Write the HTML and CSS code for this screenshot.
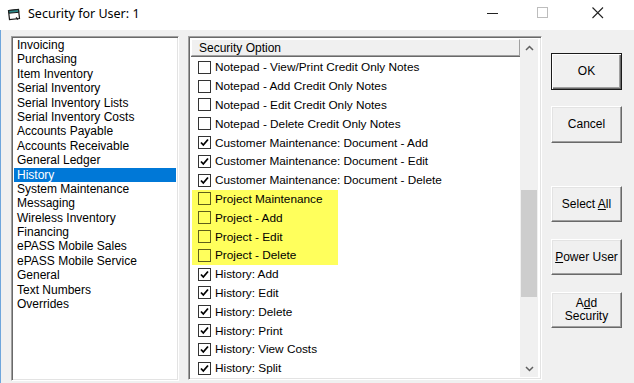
FILE: index.html
```html
<!DOCTYPE html>
<html>
<head>
<meta charset="utf-8">
<link rel="stylesheet" href="styles.css">
</head>
<body>
<div class="window">
  <div class="titlebar">
    <svg class="app-icon" width="14" height="13" viewBox="0 0 14 13">
      <path d="M1.5 2.5 L11.5 1.5 L12.5 10.5 L2.5 11.5 Z" fill="#fff" stroke="#1a1a1a" stroke-width="1.2"/>
      <path d="M1.7 2.5 L11.5 1.5 L11.8 4.3 L2 5.2 Z" fill="#2d8c8c" stroke="#1a1a1a" stroke-width="1"/>
      <path d="M9 9.5 L11 11.5" stroke="#1a1a1a" stroke-width="1.2"/>
    </svg>
    <span class="title">Security for User: 1</span>
    <div class="win-controls">
      <span class="ctl ctl-min"><svg width="12" height="12" viewBox="0 0 12 12"><path d="M0 6.5 H11" stroke="#222" stroke-width="1"/></svg></span>
      <span class="ctl ctl-max"><svg width="12" height="12" viewBox="0 0 12 12"><rect x="0.5" y="0.5" width="10" height="10" fill="none" stroke="#bdbdbd" stroke-width="1"/></svg></span>
      <span class="ctl ctl-close"><svg width="12" height="12" viewBox="0 0 12 12"><path d="M0.5 0.5 L11 11 M11 0.5 L0.5 11" stroke="#222" stroke-width="1.1"/></svg></span>
    </div>
  </div>
  <div class="content">
    <div class="listbox">
      <div class="lb-item">Invoicing</div>
      <div class="lb-item">Purchasing</div>
      <div class="lb-item">Item Inventory</div>
      <div class="lb-item">Serial Inventory</div>
      <div class="lb-item">Serial Inventory Lists</div>
      <div class="lb-item">Serial Inventory Costs</div>
      <div class="lb-item">Accounts Payable</div>
      <div class="lb-item">Accounts Receivable</div>
      <div class="lb-item">General Ledger</div>
      <div class="lb-item selected">History</div>
      <div class="lb-item">System Maintenance</div>
      <div class="lb-item">Messaging</div>
      <div class="lb-item">Wireless Inventory</div>
      <div class="lb-item">Financing</div>
      <div class="lb-item">ePASS Mobile Sales</div>
      <div class="lb-item">ePASS Mobile Service</div>
      <div class="lb-item">General</div>
      <div class="lb-item">Text Numbers</div>
      <div class="lb-item">Overrides</div>
    </div>
    <div class="listview">
      <div class="lv-main">
        <div class="lv-header"><span class="lv-col">Security Option</span></div>
        <div class="lv-rows">
          <div class="row"><span class="cb"></span><span class="lbl">Notepad - View/Print Credit Only Notes</span></div>
          <div class="row"><span class="cb"></span><span class="lbl">Notepad - Add Credit Only Notes</span></div>
          <div class="row"><span class="cb"></span><span class="lbl">Notepad - Edit Credit Only Notes</span></div>
          <div class="row"><span class="cb"></span><span class="lbl">Notepad - Delete Credit Only Notes</span></div>
          <div class="row"><span class="cb checked"><svg width="11" height="11" viewBox="0 0 11 11"><path d="M2 5.5 L4.3 8 L9 2.5" fill="none" stroke="#000" stroke-width="1.8"/></svg></span><span class="lbl">Customer Maintenance: Document - Add</span></div>
          <div class="row"><span class="cb checked"><svg width="11" height="11" viewBox="0 0 11 11"><path d="M2 5.5 L4.3 8 L9 2.5" fill="none" stroke="#000" stroke-width="1.8"/></svg></span><span class="lbl">Customer Maintenance: Document - Edit</span></div>
          <div class="row"><span class="cb checked"><svg width="11" height="11" viewBox="0 0 11 11"><path d="M2 5.5 L4.3 8 L9 2.5" fill="none" stroke="#000" stroke-width="1.8"/></svg></span><span class="lbl">Customer Maintenance: Document - Delete</span></div>
          <div class="highlight">
            <div class="row"><span class="cb"></span><span class="lbl">Project Maintenance</span></div>
            <div class="row"><span class="cb"></span><span class="lbl">Project - Add</span></div>
            <div class="row"><span class="cb"></span><span class="lbl">Project - Edit</span></div>
            <div class="row"><span class="cb"></span><span class="lbl">Project - Delete</span></div>
          </div>
          <div class="row"><span class="cb checked"><svg width="11" height="11" viewBox="0 0 11 11"><path d="M2 5.5 L4.3 8 L9 2.5" fill="none" stroke="#000" stroke-width="1.8"/></svg></span><span class="lbl">History: Add</span></div>
          <div class="row"><span class="cb checked"><svg width="11" height="11" viewBox="0 0 11 11"><path d="M2 5.5 L4.3 8 L9 2.5" fill="none" stroke="#000" stroke-width="1.8"/></svg></span><span class="lbl">History: Edit</span></div>
          <div class="row"><span class="cb checked"><svg width="11" height="11" viewBox="0 0 11 11"><path d="M2 5.5 L4.3 8 L9 2.5" fill="none" stroke="#000" stroke-width="1.8"/></svg></span><span class="lbl">History: Delete</span></div>
          <div class="row"><span class="cb checked"><svg width="11" height="11" viewBox="0 0 11 11"><path d="M2 5.5 L4.3 8 L9 2.5" fill="none" stroke="#000" stroke-width="1.8"/></svg></span><span class="lbl">History: Print</span></div>
          <div class="row"><span class="cb checked"><svg width="11" height="11" viewBox="0 0 11 11"><path d="M2 5.5 L4.3 8 L9 2.5" fill="none" stroke="#000" stroke-width="1.8"/></svg></span><span class="lbl">History: View Costs</span></div>
          <div class="row"><span class="cb checked"><svg width="11" height="11" viewBox="0 0 11 11"><path d="M2 5.5 L4.3 8 L9 2.5" fill="none" stroke="#000" stroke-width="1.8"/></svg></span><span class="lbl">History: Split</span></div>
        </div>
      </div>
      <div class="scrollbar">
        <div class="sb-arrow"><svg width="9" height="6" viewBox="0 0 9 6"><path d="M1 5 L4.5 1.5 L8 5" fill="none" stroke="#606060" stroke-width="1.5"/></svg></div>
        <div class="sb-track">
          <div class="sb-space-top"></div>
          <div class="sb-thumb"></div>
        </div>
        <div class="sb-arrow"><svg width="9" height="6" viewBox="0 0 9 6"><path d="M1 1 L4.5 4.5 L8 1" fill="none" stroke="#606060" stroke-width="1.5"/></svg></div>
      </div>
    </div>
    <div class="buttons">
      <div class="btn btn-default"><span>OK</span></div>
      <div class="btn btn-cancel"><span>Cancel</span></div>
      <div class="btn btn-select"><span>Select <u>A</u>ll</span></div>
      <div class="btn btn-power"><span><u>P</u>ower User</span></div>
      <div class="btn btn-add"><span>A<u>d</u>d<br>Security</span></div>
    </div>
  </div>
</div>
</body>
</html>
```

FILE: styles.css
```css
* { box-sizing: border-box; }
html, body { margin: 0; padding: 0; }
body {
  width: 634px;
  height: 383px;
  overflow: hidden;
  background: #f0f0f0;
  font-family: "Liberation Sans", Arial, sans-serif;
  font-size: 12px;
  color: #000;
}
.window {
  width: 634px;
  height: 383px;
  display: flex;
  flex-direction: column;
}
.titlebar {
  height: 30px;
  background: #fff;
  display: flex;
  align-items: center;
  padding-left: 7px;
  flex-shrink: 0;
}
.app-icon { margin-top: -2px; }
.title {
  margin-left: 7px;
  font-family: "Noto Sans", "Open Sans", sans-serif;
  font-size: 12.5px;
  color: #000;
  margin-top: -3px;
}
.win-controls {
  margin-left: auto;
  display: flex;
  height: 30px;
}
.ctl {
  width: 46px;
  height: 30px;
  display: flex;
  align-items: center;
  justify-content: center;
  padding-bottom: 4px;
}
.ctl-min { width: 46px; margin-right: 4px; }
.ctl-max { width: 46px; }
.ctl-close { width: 52px; margin-left: 6px; margin-right: 10px; }

.content {
  flex: 1;
  display: flex;
  align-items: flex-start;
  padding: 6px 0 0 11px;
  border-left: 1px solid #6fa6dc;
}
.listbox {
  width: 168px;
  height: 345px;
  background: #fff;
  border-top: 1px solid #a0a0a0;
  border-left: 1px solid #a0a0a0;
  border-right: 1px solid #fff;
  border-bottom: 1px solid #fff;
  box-shadow: inset 1px 1px 0 #696969, inset -1px -1px 0 #e3e3e3;
  padding: 1px 2px 0 2px;
  margin-left: -1px;
}
.lb-item {
  height: 14.4px;
  line-height: 14.4px;
  padding-left: 3px;
  white-space: nowrap;
}
.lb-item.selected {
  background: #0078d7;
  color: #fff;
}

.listview {
  width: 354px;
  height: 344px;
  margin-left: 9px;
  background: #fff;
  border-top: 1px solid #a0a0a0;
  border-left: 1px solid #a0a0a0;
  border-right: 1px solid #fff;
  border-bottom: 1px solid #fff;
  box-shadow: inset 1px 1px 0 #696969, inset -1px -1px 0 #e3e3e3;
  padding: 2px 3px 2px 2px;
  display: flex;
}
.lv-main {
  flex: 1;
  display: flex;
  flex-direction: column;
  overflow: hidden;
}
.lv-header {
  height: 17px;
  flex-shrink: 0;
  background: #f0f0f0;
  border-top: 1px solid #fff;
  border-left: 1px solid #fff;
  border-bottom: 1px solid #a0a0a0;
  border-right: 1px solid #a0a0a0;
  box-shadow: 0 1px 0 #696969;
  display: flex;
  align-items: center;
  padding-left: 7px;
}
.lv-col { line-height: 14px; }
.lv-rows {
  padding-top: 2px;
  font-size: 11.8px;
}
.row {
  height: 18.8px;
  display: flex;
  align-items: center;
  padding-left: 7px;
  white-space: nowrap;
}
.cb {
  width: 13px;
  height: 13px;
  border: 1px solid #333;
  background: #fff;
  display: flex;
  align-items: center;
  justify-content: center;
  flex-shrink: 0;
}
.lbl { margin-left: 4px; }
.highlight {
  width: 146px;
  margin-left: 1px;
  background: #ffff5c;
}
.highlight .row { padding-left: 6px; }
.highlight .cb {
  background: #ffff5c;
  border-color: #5e5e1a;
}

.scrollbar {
  width: 18px;
  display: flex;
  flex-direction: column;
  background: #f0f0f0;
}
.sb-arrow {
  height: 17px;
  display: flex;
  align-items: center;
  justify-content: center;
  flex-shrink: 0;
}
.sb-track {
  flex: 1;
  display: flex;
  flex-direction: column;
  padding: 0 1px;
}
.sb-space-top { height: 134px; flex-shrink: 0; }
.sb-thumb {
  height: 107px;
  background: #cdcdcd;
}

.buttons {
  margin-left: 9px;
  width: 71px;
  display: flex;
  flex-direction: column;
  padding-top: 17px;
}
.btn {
  height: 37px;
  background: #f0f0f0;
  border-top: 1px solid #fff;
  border-left: 1px solid #fff;
  border-right: 1px solid #696969;
  border-bottom: 1px solid #696969;
  box-shadow: inset -1px -1px 0 #a0a0a0, inset 1px 1px 0 #e3e3e3;
  display: flex;
  align-items: center;
  justify-content: center;
  text-align: center;
  line-height: 13px;
  flex-shrink: 0;
}
.btn-default {
  border: 1px solid #1a1a1a;
  box-shadow: inset 1px 1px 0 #fff, inset -1px -1px 0 #696969, inset -2px -2px 0 #a0a0a0;
}
.btn-cancel { margin-top: 16px; }
.btn-select { margin-top: 43px; height: 36px; }
.btn-power { margin-top: 17px; height: 36px; }
.btn-add { margin-top: 17px; height: 36px; }
```
